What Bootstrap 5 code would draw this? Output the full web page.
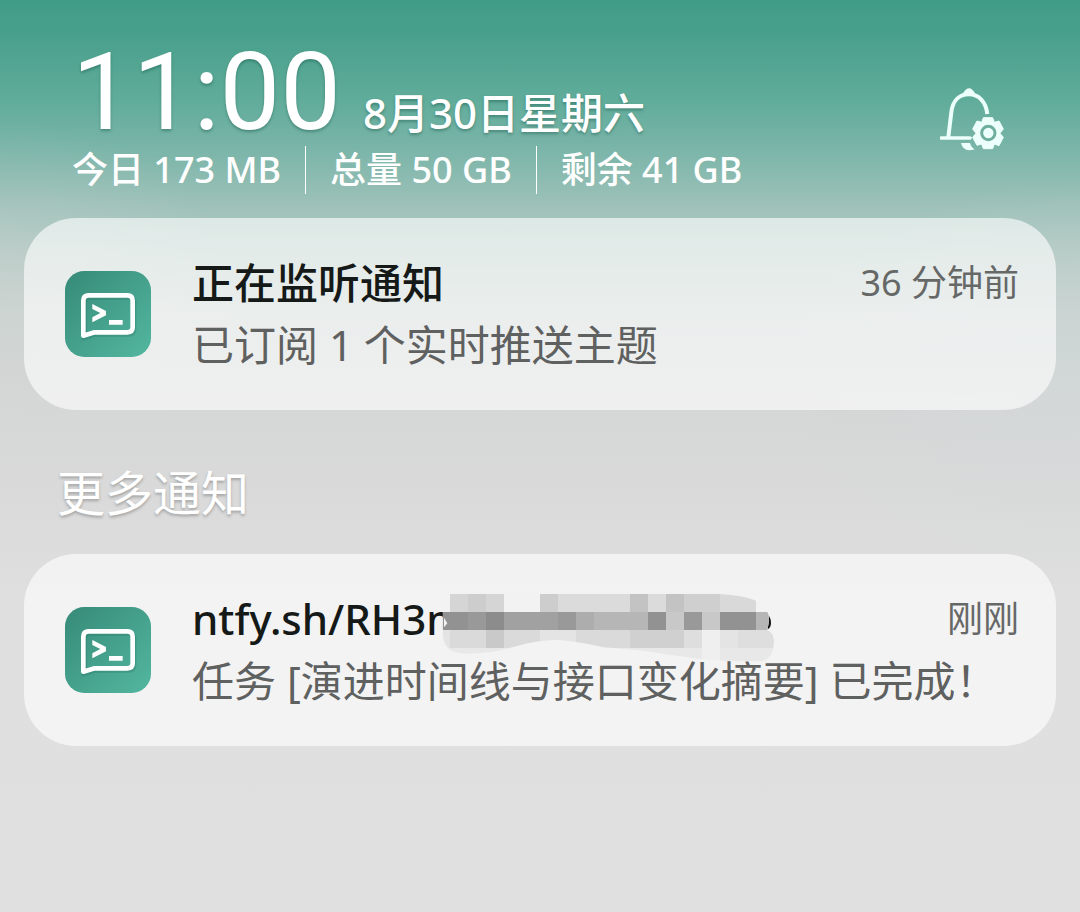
<!DOCTYPE html>
<html lang="zh-CN">
<head>
<meta charset="utf-8">
<meta name="viewport" content="width=device-width, initial-scale=1">
<title>通知中心</title>
<link href="https://cdn.jsdelivr.net/npm/bootstrap@5.3.0/dist/css/bootstrap.min.css" rel="stylesheet">
<style>
  body {
    font-family: "Noto Sans", "Noto Sans CJK SC", sans-serif;
    min-height: 100vh;
    background:
      radial-gradient(ellipse 240px 180px at 0 300px, rgba(216,216,216,.3), rgba(216,216,216,0)),
      radial-gradient(ellipse 300px 200px at 100% 380px, rgba(208,218,219,.4), rgba(208,218,219,0)),
      linear-gradient(#409c87 0, #4aa18d 40px, #60ac9a 100px, #7bb5a9 150px, #9ac0b7 200px, #b4cac4 250px, #c8d2cf 310px, #d5d6d6 400px, #dadada 500px, #dfdfdf 600px, #e0e0e0 100%) no-repeat #e0e0e0;
  }
  .shade { padding: 38px 24px 0; }
  .status-head { padding: 0 52px 0 48px; }
  .clock { font-family: Roboto, sans-serif; font-size: 108px; line-height: 108px; text-shadow: 0 2px 3px rgba(0,60,50,.35); }
  .date-line { font-size: 42px; line-height: 48px; font-weight: 500; margin-left: 22px; text-shadow: 0 2px 3px rgba(0,60,50,.35); }
  .usage { font-size: 36px; line-height: 48px; font-weight: 500; }
  .usage li + li { border-left: 1px solid #fff; margin-left: 24px; padding-left: 24px; }
  .notice {
    background: rgba(255,255,255,.62);
    border-radius: 52px;
    padding: 34px 37px 34px 41px;
    min-height: 192px;
    gap: 41px;
  }
  .notice-title { font-size: 42px; line-height: 62px; font-weight: 500; color: #151917; }
  .notice-text { font-size: 42px; line-height: 62px; color: #5f6060; }
  .notice-time { font-size: 36px; line-height: 62px; color: #666868; }
  .more-title { font-size: 48px; line-height: 64px; padding: 51px 0 29px 33px; text-shadow: 0 2px 3px rgba(0,0,0,.25); }
  .censor { position: absolute; left: 250px; top: 6px; }
</style>
</head>
<body>
<svg class="position-absolute" width="0" height="0" aria-hidden="true">
  <defs>
    <linearGradient id="tile" x1="0" y1="0" x2="1" y2="1">
      <stop offset="0" stop-color="#368a78"/><stop offset="1" stop-color="#53b7a0"/>
    </linearGradient>
    <symbol id="app" viewBox="45 33 258 258">
      <rect x="45" y="33" width="258" height="258" rx="58" fill="url(#tile)"/>
      <path d="M103 232V127Q103 111 119 111H235Q251 111 251 127V207Q251 222 235 222H137Z" fill="none" stroke="#277866" stroke-opacity=".35" stroke-width="16"/>
      <path d="M100 227V122Q100 106 116 106H232Q248 106 248 122V202Q248 217 232 217H134Z" fill="none" stroke="#fff" stroke-width="14" stroke-linejoin="round"/>
      <path d="M127 132 168 153V166L127 187V172L151 159 127 147ZM177 180H218V194H177Z" fill="#fff"/>
    </symbol>
  </defs>
</svg>
<main class="shade">
  <header class="status-head text-white d-flex justify-content-between align-items-center">
    <div>
      <div class="d-flex align-items-baseline">
        <time class="clock">11:00</time>
        <span class="date-line">8月30日星期六</span>
      </div>
      <ul class="usage list-unstyled d-flex mb-0">
        <li>今日 173 MB</li>
        <li>总量 50 GB</li>
        <li>剩余 41 GB</li>
      </ul>
    </div>
    <button type="button" class="btn p-0 border-0 mt-2" aria-label="通知设置">
      <svg class="d-block" width="64" height="64" viewBox="60 53 192 192">
        <path d="M64 203H150" fill="none" stroke="#ecfffa" stroke-width="11" stroke-linecap="round"/>
        <path d="M85 200 94 126C98 91 118 72 147 72S198 94 202 131" fill="none" stroke="#ecfffa" stroke-width="12"/>
        <path d="M129 69Q147 39 165 69Z" fill="#ecfffa"/>
        <path d="M123 218H150Q154 232 164 237 130 248 123 218Z" fill="#ecfffa"/>
        <path d="M190 142H218L223 156 237 152 250 176 240 189 250 201 237 226 223 221 218 235H190L185 221 171 225 158 201 168 189 158 176 171 152 185 156Z" fill="#ecfffa" stroke="#ecfffa" stroke-width="3" stroke-linejoin="round"/>
        <circle cx="205" cy="188" r="20" fill="#ecfffa" stroke="#6fae9f" stroke-width="9"/>
      </svg>
    </button>
  </header>

  <article class="notice d-flex align-items-center mt-4">
    <svg class="flex-shrink-0" width="86" height="86" aria-hidden="true"><use href="#app"/></svg>
    <div class="flex-grow-1">
      <div class="d-flex justify-content-between">
        <h2 class="notice-title mb-0">正在监听通知</h2>
        <time class="notice-time">36 分钟前</time>
      </div>
      <p class="notice-text mb-0">已订阅 1 个实时推送主题</p>
    </div>
  </article>

  <h1 class="more-title text-white fw-normal mb-0">更多通知</h1>

  <article class="notice d-flex align-items-center">
    <svg class="flex-shrink-0" width="86" height="86" aria-hidden="true"><use href="#app"/></svg>
    <div class="flex-grow-1">
      <div class="d-flex justify-content-between">
        <h2 class="notice-title mb-0 position-relative">ntfy.sh/RH3m
          <svg class="censor" width="333" height="68" viewBox="36 42 999 204" aria-hidden="true">
            <defs><clipPath id="smear"><path d="M60 42H870Q940 46 978 62V96H1012Q1022 110 1012 150Q1032 160 1032 185Q1030 240 990 244Q850 245 762 230Q700 222 640 212L520 202Q420 180 375 180Q320 182 260 198Q170 225 90 220Q40 215 38 160V96H60Z"/></clipPath></defs>
            <path d="M1012 104Q1023 112 1023 128T1012 148Z" fill="#111"/>
            <g clip-path="url(#smear)" shape-rendering="crispEdges">
              <path fill="#f2f2f2" d="M36 42H1035V246H36Z"/>
              <path fill="#d5d5d5" d="M60 42H114V96H60ZM168 42H222V96H168Z"/>
              <path fill="#cdcdcd" d="M114 42H168V96H114ZM330 42H384V96H330Z"/>
              <path fill="#dbdbdb" d="M384 42H600V96H384ZM654 42H708V96H654Z"/>
              <path fill="#c3c3c3" d="M600 42H654V96H600ZM708 42H762V96H708Z"/>
              <path fill="#cfcfcf" d="M762 42H870V96H762Z"/>
              <path fill="#d9d9d9" d="M870 42H978V96H870Z"/>
              <path fill="#929292" d="M36 96H114V150H36ZM654 96H708V150H654ZM870 96H978V150H870Z"/>
              <path fill="#999" d="M114 96H168V150H114ZM384 96H438V150H384ZM762 96H816V150H762Z"/>
              <path fill="#8c8c8c" d="M168 96H222V150H168Z"/>
              <path fill="#a1a1a1" d="M222 96H384V150H222Z"/>
              <path fill="#adadad" d="M438 96H492V150H438Z"/>
              <path fill="#b6b6b6" d="M492 96H654V150H492ZM978 96H1032V150H978Z"/>
              <path fill="#c8c8c8" d="M708 96H762V150H708ZM816 96H870V150H816Z"/>
              <path fill="#e4e4e4" d="M36 150H60V204H36ZM330 150H438V204H330ZM870 150H924V204H870Z"/>
              <path fill="#dadada" d="M60 150H168V204H60ZM222 150H330V204H222ZM438 150H600V204H438Z"/>
              <path fill="#c9c9c9" d="M168 150H222V204H168Z"/>
              <path fill="#d0d0d0" d="M600 150H762V204H600Z"/>
              <path fill="#dedede" d="M762 150H816V204H762ZM924 150H1035V204H924Z"/>
              <path fill="#efefef" d="M816 150H870V204H816ZM816 204H870V246H816Z"/>
              <path fill="#e8e8e8" d="M36 204H816V246H36ZM870 204H1035V246H870Z"/>
            </g>
            <path fill="#f2f2f2" d="M42 113 52 130 42 142Z"/>
          </svg>
        </h2>
        <time class="notice-time">刚刚</time>
      </div>
      <p class="notice-text mb-0">任务 [演进时间线与接口变化摘要] 已完成！</p>
    </div>
  </article>
</main>
<script src="https://cdn.jsdelivr.net/npm/bootstrap@5.3.0/dist/js/bootstrap.bundle.min.js"></script>
</body>
</html>
